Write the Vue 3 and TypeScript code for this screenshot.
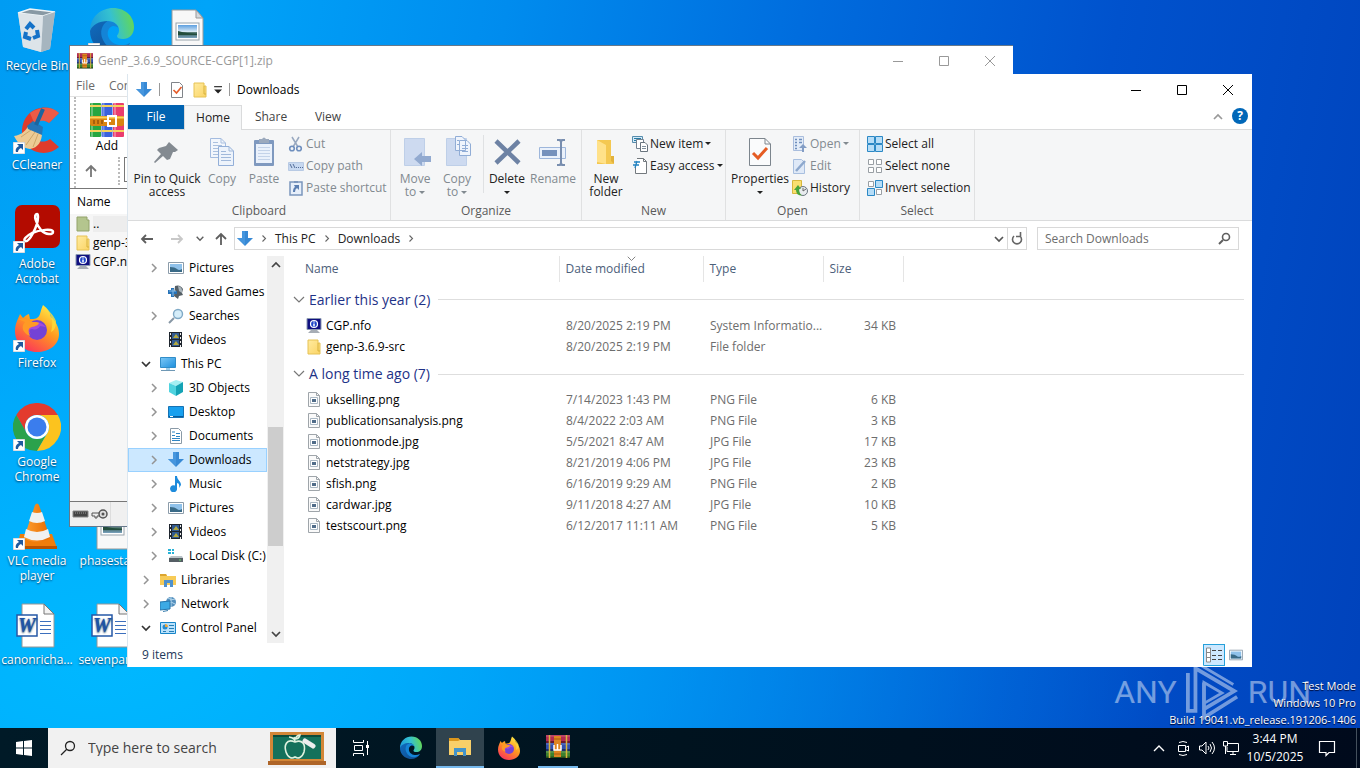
<script setup lang="ts">
import { ref } from 'vue'

interface Shortcut { label: string; icon: string; col: number; row: number; link?: boolean }
interface TreeNode { label: string; icon: string; child: boolean; arrow: '' | 'closed' | 'open'; active?: boolean }
interface FileRow { name: string; icon: string; date: string; type: string; size: string }
interface FileGroup { title: string; rows: FileRow[] }

const shortcuts: Shortcut[] = [
  { label: 'Recycle Bin', icon: 'bin', col: 1, row: 1 },
  { label: 'CCleaner', icon: 'ccleaner', col: 1, row: 2, link: true },
  { label: 'Adobe Acrobat', icon: 'acrobat', col: 1, row: 3, link: true },
  { label: 'Firefox', icon: 'firefox', col: 1, row: 4, link: true },
  { label: 'Google Chrome', icon: 'chrome', col: 1, row: 5, link: true },
  { label: 'VLC media player', icon: 'vlc', col: 1, row: 6, link: true },
  { label: 'canonricha...', icon: 'word', col: 1, row: 7 },
  { label: '', icon: 'edge', col: 2, row: 1, link: true },
  { label: 'phasestar...', icon: 'picfile', col: 2, row: 6 },
  { label: 'sevenpark...', icon: 'word', col: 2, row: 7 },
  { label: '', icon: 'picfile', col: 3, row: 1 },
]

const tree: TreeNode[] = [
  { label: 'Pictures', icon: 'pictures', child: true, arrow: 'closed' },
  { label: 'Saved Games', icon: 'games', child: true, arrow: '' },
  { label: 'Searches', icon: 'searches', child: true, arrow: 'closed' },
  { label: 'Videos', icon: 'videos', child: true, arrow: '' },
  { label: 'This PC', icon: 'pc', child: false, arrow: 'open' },
  { label: '3D Objects', icon: 'cube', child: true, arrow: 'closed' },
  { label: 'Desktop', icon: 'screen', child: true, arrow: 'closed' },
  { label: 'Documents', icon: 'document', child: true, arrow: 'closed' },
  { label: 'Downloads', icon: 'down', child: true, arrow: 'closed', active: true },
  { label: 'Music', icon: 'music', child: true, arrow: 'closed' },
  { label: 'Pictures', icon: 'pictures', child: true, arrow: 'closed' },
  { label: 'Videos', icon: 'videos', child: true, arrow: 'closed' },
  { label: 'Local Disk (C:)', icon: 'disk', child: true, arrow: 'closed' },
  { label: 'Libraries', icon: 'libraries', child: false, arrow: 'closed' },
  { label: 'Network', icon: 'network', child: false, arrow: 'closed' },
  { label: 'Control Panel', icon: 'cpanel', child: false, arrow: 'open' },
]

const groups: FileGroup[] = [
  {
    title: 'Earlier this year (2)',
    rows: [
      { name: 'CGP.nfo', icon: 'nfo', date: '8/20/2025 2:19 PM', type: 'System Informatio...', size: '34 KB' },
      { name: 'genp-3.6.9-src', icon: 'folder', date: '8/20/2025 2:19 PM', type: 'File folder', size: '' },
    ],
  },
  {
    title: 'A long time ago (7)',
    rows: [
      { name: 'ukselling.png', icon: 'image', date: '7/14/2023 1:43 PM', type: 'PNG File', size: '6 KB' },
      { name: 'publicationsanalysis.png', icon: 'image', date: '8/4/2022 2:03 AM', type: 'PNG File', size: '3 KB' },
      { name: 'motionmode.jpg', icon: 'image', date: '5/5/2021 8:47 AM', type: 'JPG File', size: '17 KB' },
      { name: 'netstrategy.jpg', icon: 'image', date: '8/21/2019 4:06 PM', type: 'JPG File', size: '23 KB' },
      { name: 'sfish.png', icon: 'image', date: '6/16/2019 9:29 AM', type: 'PNG File', size: '2 KB' },
      { name: 'cardwar.jpg', icon: 'image', date: '9/11/2018 4:27 AM', type: 'JPG File', size: '10 KB' },
      { name: 'testscourt.png', icon: 'image', date: '6/12/2017 11:11 AM', type: 'PNG File', size: '5 KB' },
    ],
  },
]

const selected = ref('Downloads')
const query = ref('')
const taskQuery = ref('')
</script>

<template>
  <svg class="sprite" aria-hidden="true">
    <defs>
      <linearGradient id="gEdge" x1="0" y1="0.5" x2="1" y2="0.3"><stop offset="0" stop-color="#1c9ddb" /><stop offset=".5" stop-color="#35c1d0" /><stop offset="1" stop-color="#66d94f" /></linearGradient>
      <linearGradient id="gEdge2" x1="0" y1="0" x2="1" y2="1"><stop offset="0" stop-color="#0f6cbf" /><stop offset="1" stop-color="#114a8b" /></linearGradient>
      <linearGradient id="gFox" x1="0.8" y1="0" x2="0.2" y2="1"><stop offset="0" stop-color="#fff04a" /><stop offset=".45" stop-color="#ff9a1f" /><stop offset="1" stop-color="#fb2d5f" /></linearGradient>
      <linearGradient id="gFolder" x1="0" y1="0" x2="1" y2="1"><stop offset="0" stop-color="#ffeba0" /><stop offset="1" stop-color="#fbd465" /></linearGradient>
      <linearGradient id="gScreen" x1="0" y1="0" x2="1" y2="1"><stop offset="0" stop-color="#7cc8f7" /><stop offset="1" stop-color="#1d8fdc" /></linearGradient>
      <linearGradient id="gPhoto" x1="0" y1="0" x2="0" y2="1"><stop offset="0" stop-color="#5c9fe0" /><stop offset=".5" stop-color="#d5e7f4" /><stop offset=".6" stop-color="#335c50" /><stop offset="1" stop-color="#7ba3c0" /></linearGradient>
      <linearGradient id="gCone" x1="0" y1="0" x2="1" y2="0"><stop offset="0" stop-color="#ffa033" /><stop offset="1" stop-color="#e66a00" /></linearGradient>
    </defs>

    <symbol id="bin" viewBox="0 0 48 48"><path d="M5 6 17 2 42 5 37 42 28 45 10 40Z" fill="#c9d3da" /><path d="M5 6 17 2 42 5 30 9Z" fill="#8899a4" stroke="#eef4f7" stroke-width="1.4" /><path d="M30 9 42 5 37 42 28 45Z" fill="#a6b5bf" /><path d="M5 6 30 9 28 45 10 40Z" fill="#dde4e9" /><g fill="none" stroke="#1572c8" stroke-width="4"><path d="m13 22 4-5 4 4M24 23l1 6-5 2M18 32l-6-2 1-5" /></g></symbol>
    <symbol id="edge" viewBox="0 0 48 48"><path d="M2 24C2 15 12 12 20 14 15 18 14 26 18 32c4 7 16 10 24 4-5 9-15 12-24 9C8 42 2 34 2 24Z" fill="url(#gEdge2)" /><path d="M20 14c-6 3-9 11-5 19 3 7 11 11 18 9 4-1 7-3 9-6-9 5-20 1-22-7-1-5 1-9 5-10 3 0 5 1 6 3-1-5-5-8-11-8Z" fill="#1484d6" /><path d="M2 24C2 10 13 1 25 1c13 0 21 9 21 19 0 8-5 12-11 12-4 0-6-1-6-3 0-1 2-2 2-6 0-5-5-9-11-9C11 14 4 18 2 24Z" fill="url(#gEdge)" /></symbol>
    <symbol id="picfile" viewBox="0 0 48 48"><path d="M9 3H33L40 11V47H9Z" fill="#f8f8f8" stroke="#999" /><path d="M33 3V11H40Z" fill="#d4d9de" stroke="#999" /><rect x="13" y="16" width="23" height="17" fill="#fff" stroke="#98a3ac" /><rect x="15" y="18" width="19" height="13" fill="url(#gPhoto)" /><path d="M15 24c7 2 12 2 19 3v1H15Z" fill="#234d3c" /></symbol>
    <symbol id="ccleaner" viewBox="0 0 48 48"><path d="M46 7 36 17C29 11 20 16 20 25c0 9 9 14 17 8l9 8C33 53 9 46 9 26 9 3 33-5 46 7Z" fill="#df3b2b" /><path d="M46 7 36 17c-5-4-11-2-14 2L17 7C26 1 38-1 46 7Z" fill="#f3715a" opacity=".6" /><path d="M1 30c8-1 12-6 15-11l13 8c0 8-4 15-12 16C10 42 5 38 1 30Z" fill="#eccb95" /><path d="m8 31 10-7M13 39l9-13M20 41l5-13" stroke="#cda769" /><path d="m14 20 6-5 10 6-1 8-14-6Z" fill="#2376b8" /><path d="m23 19 7-16" stroke="#1b659f" stroke-width="4" /></symbol>
    <symbol id="acrobat" viewBox="0 0 48 48"><rect x="2" y="0" width="45" height="43" rx="7" fill="#b30b00" /><path d="M24 9c-4 0-1 10 4 16 5 5 12 5 12 2 0-4-14-2-21 1-6 3-9 7-7 8 4 2 13-15 13-24 0-2 0-3-1-3Z" fill="none" stroke="#fff" stroke-width="2.500" /></symbol>
    <symbol id="firefox" viewBox="0 0 48 48"><path d="M30 1c5 4 7 7 8 12 4 4 8 9 8 17 0 11-10 18-22 18C11 48 2 39 2 27 2 20 5 15 7 10l3 4c2-2 3-3 6-4l1 5c5 0 8 0 10-5 1-4 2-7 3-9Z" fill="url(#gFox)" /><circle cx="24" cy="26" r="10" fill="#7442d6" /><path d="M14 24c2-6 13-9 19-1l-6-1c-1 3-5 4-8 3-3 0-3 3-1 5-3-1-4-3-4-6Z" fill="#a44bdd" /><path d="M5 15c5-1 9-1 12 2 3 2 7 0 9 2-1 4-8 3-10 6-1 2 0 4 1 7-8-3-9-10-5-14Z" fill="#ff9a25" /><path d="M31 2c8 8 10 16 7 26 4-2 5-6 5-11-3-7-8-11-12-15Z" fill="#ffdc3b" opacity=".8" /></symbol>
    <symbol id="chrome" viewBox="0 0 48 48"><path d="M24 12h20.800A24 24 0 0 0 3.200 12l10.400 18A12 12 0 0 1 24 12Z" fill="#e33b2e" /><path d="M13.600 30 3.200 12A24 24 0 0 0 24 48l10.400-18a12 12 0 0 1-20.800 0Z" fill="#2ba24c" /><path d="M34.400 30 24 48a24 24 0 0 0 20.800-36H24a12 12 0 0 1 10.400 18Z" fill="#fcc31e" /><circle cx="24" cy="24" r="12" fill="#fff" /><circle cx="24" cy="24" r="9.500" fill="#3b7ded" /></symbol>
    <symbol id="vlc" viewBox="0 0 48 48"><path d="M7 32H39L44 46H4Z" fill="#ef7d0b" /><path d="M4 44H44V47H4Z" fill="#b95300" /><path d="M22 3Q24 0 26 3L37 36Q24 44 11 36Z" fill="url(#gCone)" /><path d="m19 10-3 9q8 4 16 0l-3-9q-5 2-10 0ZM13 27l-2 8q13 7 26 0l-2-8q-11 6-22 0Z" fill="#f1f1f1" /></symbol>
    <symbol id="word" viewBox="0 0 48 48"><path d="M9 3H31L41 13V46H9Z" fill="#fff" stroke="#969696" /><path d="M31 3V13H41Z" fill="#f3f3f3" stroke="#777" /><path d="M27 20.500H38M27 24.500H38M27 28.500H38M27 32.500H38" stroke="#3b6fbd" /><rect x="4" y="14" width="20" height="21" fill="#fff" stroke="#2658a6" stroke-width="1.500" /><text x="14" y="31" text-anchor="middle" font-family="Liberation Serif, serif" font-size="20" font-weight="700" font-style="italic" fill="#1f53a6">W</text></symbol>
    <symbol id="link" viewBox="0 0 12 12"><path d="M0 0H12V12H0Z" fill="#fff" stroke="#b7bec6" /><path d="M4 2H10V8L8 6C6 7 5 8 5 10H3C2 7 4 5 6 4Z" fill="#205a9e" /></symbol>

    <symbol id="rar" viewBox="0 0 34 34"><rect x="0" y="0" width="11" height="34" rx="1" fill="#27a640" /><rect x="11.500" y="0" width="11" height="34" rx="1" fill="#3a62dd" /><rect x="23" y="0" width="11" height="34" rx="1" fill="#ea3c6e" /><path d="M2 0V34M13.500 0V34M25 0V34" stroke="#fff" stroke-opacity=".3" stroke-width="2" /><path d="M0 3H11M11.500 3H22.500M23 3H34M0 28H11M11.500 28H22.500M23 28H34" stroke="#f5d25d" stroke-width="2" /><rect x="0" y="13" width="34" height="10" rx="2" fill="#d98412" /><path d="M0 14.500H34" stroke="#ffd45a" stroke-width="2" /><path d="M4 17v4m4-4v4m4-4v4" stroke="#773b07" /><rect x="18" y="13" width="8" height="10" fill="none" stroke="#fff" stroke-width="2" /><path d="M14 18H21" stroke="#fff" stroke-width="2" /></symbol>
    <symbol id="rarsmall" viewBox="0 0 24 24"><path d="M0 0H24V8H0Z" fill="#b12a52" /><path d="M0 8H24V16H0Z" fill="#304fae" /><path d="M0 16H24V23H0Z" fill="#3c812e" /><path d="M0 1H24M0 9H24M0 17H24" stroke="#fff" stroke-opacity=".25" /><path d="M0 7H24M0 15H24M0 22.500H24" stroke="#000" stroke-opacity=".4" stroke-width="2" /><path d="M3.500 0V23M20.500 0V23" stroke="#d8b43c" stroke-width="1.500" /><rect x="8" y="1" width="7" height="21" fill="#df8520" /><path d="M8 4H15M8 19H15" stroke="#a45a0e" /><path d="M8 10V15H15V10M11.500 9V15" fill="none" stroke="#fff" stroke-width="1.500" /></symbol>
    <symbol id="folder" viewBox="0 0 16 16"><path d="M2 1H12V4H14V15H2Z" fill="url(#gFolder)" stroke="#e6c255" /><path d="M12 4V12H14" stroke="#d7b23d" fill="none" /></symbol>
    <symbol id="upfolder" viewBox="0 0 16 16"><path d="M2 1H12V4H14V15H2Z" fill="#b4c58e" stroke="#93a36b" /></symbol>
    <symbol id="nfo" viewBox="0 0 16 16"><path d="M1 .5H15V11.500H1Z" fill="#101080" stroke="#8b99b1" /><circle cx="8" cy="6" r="3.500" fill="#1f46c8" stroke="#fff" stroke-width="1.200" /><path d="M8 3.500V4.500M8 5.500V8.500" stroke="#fff" stroke-width="1.500" /><path d="M5 12H11L14 15H2Z" fill="#a7adb5" /></symbol>
    <symbol id="image" viewBox="0 0 16 16"><path d="M2.500.5H10.500L13.500 3.500V14.500H2.500Z" fill="#fafafa" stroke="#9fa5aa" /><path d="M10.500.5V3.500H13.500" fill="none" stroke="#9fa5aa" /><path d="M4.500 5.500H11.500V11.500H4.500Z" fill="#fff" stroke="#aab8c4" /><path d="M6 7H10V10H6Z" fill="#506c89" /></symbol>
    <symbol id="down" viewBox="0 0 16 16"><path d="M5 0H11V7H16L8 15 0 7H5Z" fill="#3789d5" /><path d="M5 0H8V14L0 7H5Z" fill="#4d9be1" opacity=".7" /></symbol>
    <symbol id="pictures" viewBox="0 0 16 16"><path d="M.5 2.500H15.500V13.500H.5Z" fill="#fff" stroke="#8c9caa" /><path d="M2 4H14V12H2Z" fill="#8fc1ea" /><path d="M2 7Q7 7 9 9T14 9V12H2Z" fill="#396a87" /></symbol>
    <symbol id="games" viewBox="0 0 16 16"><path d="M7 2Q12 0 15 5L14 9 15 11 11 12 10 15 6 12Z" fill="#555f66" /><path d="M10 2Q15 3 14 9L11 7Z" fill="#a9b4bb" /><path d="M0 6H3V4H6V7H9V10H6V13H3V10H0Z" fill="#2773b8" /><path d="M1 7H8M5 5V12" stroke="#87bbe5" /></symbol>
    <symbol id="searches" viewBox="0 0 16 16"><path d="m6 10-5 5" stroke="#8797a5" stroke-width="2" /><circle cx="10" cy="6" r="4.500" fill="#d5edf9" stroke="#7fa9c6" stroke-width="1.400" /></symbol>
    <symbol id="videos" viewBox="0 0 16 16"><path d="M1 0H14V15H1Z" fill="#1e252e" /><path d="M4 1H11V7H4ZM4 8H11V14H4Z" fill="#315a91" /><path d="m5 6 3-4 3 4ZM5 13l3-4 3 4Z" fill="#b3a93f" /><path d="M2.500 1V15M12.500 1V15" stroke="#eee" stroke-dasharray="2 2" /></symbol>
    <symbol id="pc" viewBox="0 0 16 16"><path d="M.5 1.500H15.500V11.500H.5Z" fill="url(#gScreen)" stroke="#318dc8" /><path d="M1 14.500H15" stroke="#6f98b5" /><path d="M6 12H10V14H6Z" fill="#9ccdea" /></symbol>
    <symbol id="cube" viewBox="0 0 16 16"><path d="m1 3 7-3 7 2-7 4Z" fill="#a5f0f3" /><path d="M1 3 8 6V16L1 12Z" fill="#4fd3df" /><path d="m8 6 7-4V12L8 16Z" fill="#14a3b5" /></symbol>
    <symbol id="screen" viewBox="0 0 16 16"><path d="M.5 2.500H15.500V13.500H.5Z" fill="#18a0ef" stroke="#1672b3" /><path d="M1 12.500H15" stroke="#075c9d" /><path d="M2 12.500H5" stroke="#fff" /></symbol>
    <symbol id="document" viewBox="0 0 16 16"><path d="M2.500.5H10.500L13.500 3.500V15.500H2.500Z" fill="#fff" stroke="#8a9aa7" /><path d="M4 4H7M8 5.500H12M4 7.500H7M8 8.500H12M4 10.500H12M4 12.500H12" stroke="#2f86c4" stroke-width="1.200" /></symbol>
    <symbol id="music" viewBox="0 0 16 16"><path d="M7 0H9C9 4 13 5 13 9L11 12C12 8 10 7 9 7V12A3.500 3.500 0 1 1 7 9.500Z" fill="#1d8bdc" /></symbol>
    <symbol id="disk" viewBox="0 0 16 16"><path d="M0 1H3V3H0ZM4 1H6V3H4ZM0 4H3V6H0ZM4 4H6V6H4Z" fill="#26b2d7" /><path d="M3 8H14L15 10H1Z" fill="#bac3c8" /><path d="M1 10H15V14H1Z" fill="#555e65" /><path d="M11 12H13" stroke="#64dc6c" /></symbol>
    <symbol id="libraries" viewBox="0 0 16 16"><path d="M0 2H6L7 4H16V13H0Z" fill="#f7cb57" /><path d="M0 2H6L7 4H0Z" fill="#dca52f" /><path d="M4 8H13V15H10V11H7V15H4Z" fill="#4e91ce" /></symbol>
    <symbol id="network" viewBox="0 0 16 16"><circle cx="11" cy="6" r="5" fill="#5590be" /><path d="M8 2Q12 5 15 3M7 7Q12 5 15 8M11 1V11" stroke="#b6d8ed" fill="none" /><path d="m0 6 10-1v8l-10 1Z" fill="#3caae5" stroke="#2475ac" /><path d="M3 15.500 8 14.500" stroke="#387eae" /></symbol>
    <symbol id="cpanel" viewBox="0 0 16 16"><path d="M.5 2.500H15.500V13.500H.5Z" fill="#b9e1fb" stroke="#1685c9" /><circle cx="5" cy="7" r="2.500" fill="#268bce" /><path d="M5 7V4A3 3 0 0 1 8 7Z" fill="#eba73c" /><path d="M9 5.500H14M9 8.500H14M3 11.500H6M9 11.500H14" stroke="#257fb9" /></symbol>

    <symbol id="pin" viewBox="0 0 32 32"><path d="m18 6 9 8-3 2-2 0-3 7-3 1-4-4-8 7-1-1 7-8-4-4 2-2 7-2Z" fill="#838a91" /></symbol>
    <symbol id="copy" viewBox="0 0 32 32"><path d="M4.500 2.500H15L19.500 7V21.500H4.500Z" fill="#f2f6fc" stroke="#a4bce0" /><path d="M15 2.500V7H19.500M7 6.500H12M7 9.500H16M7 12.500H16M7 15.500H16M7 18.500H12" fill="none" stroke="#aac0df" /><path d="M12.500 10.500H23L27.500 15V29.500H12.500Z" fill="#edf3fb" stroke="#93afd8" /><path d="M23 10.500V15H27.500M15 15.500H20M15 18.500H25M15 21.500H25M15 24.500H25" fill="none" stroke="#a0b8da" /></symbol>
    <symbol id="paste" viewBox="0 0 32 32"><rect x="6" y="4" width="20" height="26" rx="1" fill="#7f99bf" /><path d="M8 8H24V27H8Z" fill="#eaf1fb" /><path d="M10 11.500H22M10 14.500H22M10 17.500H22M10 20.500H22M10 23.500H22" stroke="#c4d3e9" /><path d="M11 3H14Q16 0 18 3H21V7H11Z" fill="#9ba9bd" /></symbol>
    <symbol id="cut" viewBox="0 0 16 16"><path d="m4 1 6 10M11 1 5 11" stroke="#99a9c0" stroke-width="1.500" /><circle cx="4" cy="12.500" r="2.300" fill="none" stroke="#6f8fbe" stroke-width="1.600" /><circle cx="11" cy="12.500" r="2.300" fill="none" stroke="#6f8fbe" stroke-width="1.600" /></symbol>
    <symbol id="copypath" viewBox="0 0 16 16"><path d="M.5 4.500H15.500V12.500H.5Z" fill="#c7d8f0" stroke="#b8cae4" /><path d="m2 6 2 4m1-4 2 4" stroke="#536d99" /><path d="M8 9.500H15" stroke="#536d99" stroke-dasharray="1 1" /></symbol>
    <symbol id="pasteshort" viewBox="0 0 16 16"><path d="M2 2H14V15H2Z" fill="#e7effa" stroke="#7b96bd" stroke-width="1.500" /><path d="M6 1H10V3H6Z" fill="#7b96bd" /><path d="M6 5H11V10L9 8Q7 9 7 12H5Q5 8 7 7Z" fill="#5a7eb2" /></symbol>
    <symbol id="moveto" viewBox="0 0 32 32"><path d="M5.500 2.500H25.500V29.500H5.500Z" fill="#cddaf0" stroke="#becfe8" /><path d="m15 23 8-7V20H32V26H23V30Z" fill="#92aad0" /></symbol>
    <symbol id="copyto" viewBox="0 0 32 32"><path d="M5.500 2.500H25.500V29.500H5.500Z" fill="#cddaf0" stroke="#becfe8" /><path d="M14.500.5H21L24.500 4V14.500H14.500ZM18.500 4.500H26L29.500 8V19.500H18.500Z" fill="#eff4fc" stroke="#91add6" /><path d="M21 9.500H27M21 12.500H27M21 15.500H27M16 4.500H18M16 8.500H18" stroke="#91add6" /></symbol>
    <symbol id="delete" viewBox="0 0 32 32"><path d="M5 5 28 27M28 5 5 27" stroke="#6d82a4" stroke-width="4.500" /></symbol>
    <symbol id="rename" viewBox="0 0 32 32"><path d="M2.500 11.500H28.500V22.500H2.500Z" fill="#eaf1fb" stroke="#9db6db" /><path d="M5 14H20V20H5Z" fill="#7591bc" /><path d="M20 4H23L24 6 25 4H28M24 5V28M20 29H23L24 27 25 29H28" fill="none" stroke="#788eaf" stroke-width="2" /></symbol>
    <symbol id="newfolder" viewBox="0 0 32 32"><path d="M7 4H21V22L24 28H7Z" fill="#f4c851" /><path d="M21 20H24V28L21 25Z" fill="#e2b23c" /><path d="m7 4 9 5V28L7 26Z" fill="#ffe189" /></symbol>
    <symbol id="newitem" viewBox="0 0 16 16"><path d="M.5.5H10.500V6.500H.5Z" fill="#d4eaf8" stroke="#568cac" /><path d="M2 2.500H9M2 4.500H9" stroke="#277ca6" /><path d="M4.500 3.500H11.500V12.500H4.500Z" fill="#fff" stroke="#748290" /><path d="M8.500 6.500H13L15.500 9V15.500H8.500Z" fill="#fff" stroke="#69747e" /><path d="M10 10.500H14M10 12.500H14" stroke="#80909d" /></symbol>
    <symbol id="easy" viewBox="0 0 16 16"><path d="M5 .5H11.500L14.500 3.500V15.500H3.500V8" fill="#fff" stroke="#73797e" /><path d="M11.500.5V3.500H14.500" fill="none" stroke="#73797e" /><path d="M2 4H8M1 7H7M5 3 3 10" stroke="#2383c1" stroke-width="1.300" /></symbol>
    <symbol id="props" viewBox="0 0 32 32"><path d="M5.500 2.500H21L26.500 8V29.500H5.500Z" fill="#fafbfc" stroke="#7c858d" /><path d="M21 2.500V8H26.500" fill="none" stroke="#7c858d" /><path d="m9 17 5 5 9-10" fill="none" stroke="#e55c24" stroke-width="3" /></symbol>
    <symbol id="check" viewBox="0 0 16 16"><path d="M2.500.5H10.500L13.500 3.500V15.500H2.500Z" fill="#fff" stroke="#808489" /><path d="m4.500 8 3 3 5-6" fill="none" stroke="#e55d2b" stroke-width="1.700" /></symbol>
    <symbol id="open" viewBox="0 0 16 16"><path d="M1.500.5H11.500V14.500H1.500Z" fill="#e3ecf8" stroke="#a9bddd" /><path d="M3 3.500H5M3 6.500H5M3 9.500H5M3 12.500H5M7 3.500H10M7 6.500H10" stroke="#6f8ebc" stroke-width="1.500" /><path d="m7 12 4-4 4 4H12V16H10V12Z" fill="#839dc5" /></symbol>
    <symbol id="edit" viewBox="0 0 16 16"><path d="M1.500 1.500H9.500L12.500 4.500V15.500H1.500Z" fill="#dfe9f7" stroke="#a8bfdf" /><path d="M4 13 13 3" stroke="#8da8cd" stroke-width="2.500" /></symbol>
    <symbol id="history" viewBox="0 0 16 16"><path d="M.5.5H9.500V13.500H.5Z" fill="#f9df70" stroke="#d7b83d" /><circle cx="11" cy="11" r="4.500" fill="#e8ecef" stroke="#6a7680" /><path d="M11 8V11L14 9" stroke="#666" fill="none" /><path d="M2 10 6 5 9 9H7Q7 13 10 15.500 4 15.500 4 10Z" fill="#49a43a" /></symbol>
    <symbol id="selall" viewBox="0 0 16 16"><path d="M.5.5H7.500V7.500H.5ZM8.500.5H15.500V7.500H8.500ZM.5 8.500H7.500V15.500H.5ZM8.500 8.500H15.500V15.500H8.500Z" fill="#b6ddf7" stroke="#2b88c5" /></symbol>
    <symbol id="selnone" viewBox="0 0 16 16"><path d="M1.500 1.500H6.500V6.500H1.500ZM9.500 1.500H14.500V6.500H9.500ZM1.500 9.500H6.500V14.500H1.500ZM9.500 9.500H14.500V14.500H9.500Z" fill="#fff" stroke="#999fa4" /></symbol>
    <symbol id="invert" viewBox="0 0 16 16"><path d="M1.500 1.500H6.500V6.500H1.500ZM9.500 9.500H14.500V14.500H9.500Z" fill="#fff" stroke="#999fa4" /><path d="M8.500.5H15.500V7.500H8.500ZM.5 8.500H7.500V15.500H.5Z" fill="#b6ddf7" stroke="#2b88c5" /></symbol>
    <symbol id="caret" viewBox="0 0 6 4"><path d="M0 0H6L3 3Z" fill="currentColor" /></symbol>
    <symbol id="chevR" viewBox="0 0 8 12"><path d="M2 2 6 6 2 10" fill="none" stroke="currentColor" stroke-width="1.500" /></symbol>
    <symbol id="chevD" viewBox="0 0 12 8"><path d="M2 2 6 6 10 2" fill="none" stroke="currentColor" stroke-width="1.700" /></symbol>
    <symbol id="chevThin" viewBox="0 0 12 8"><path d="M1 1 6 6 11 1" fill="none" stroke="currentColor" stroke-width="1.200" /></symbol>
    <symbol id="chevU" viewBox="0 0 12 8"><path d="M2 6 6 2 10 6" fill="none" stroke="currentColor" stroke-width="1.700" /></symbol>
    <symbol id="min" viewBox="0 0 12 12"><path d="M1 6.500H11" stroke="currentColor" /></symbol>
    <symbol id="max" viewBox="0 0 12 12"><path d="M1.500 1.500H10.500V10.500H1.500Z" fill="none" stroke="currentColor" /></symbol>
    <symbol id="close" viewBox="0 0 12 12"><path d="m1 1 10 10M11 1 1 11" stroke="currentColor" /></symbol>
    <symbol id="left" viewBox="0 0 14 14"><path d="M13 7H2M6 3 2 7 6 11" fill="none" stroke="currentColor" stroke-width="1.800" /></symbol>
    <symbol id="right" viewBox="0 0 14 14"><path d="M1 7H12M8 3 12 7 8 11" fill="none" stroke="currentColor" stroke-width="1.800" /></symbol>
    <symbol id="up" viewBox="0 0 14 14"><path d="M7 13V2M2 7 7 2 12 7" fill="none" stroke="currentColor" stroke-width="1.800" /></symbol>
    <symbol id="glass" viewBox="0 0 16 16"><circle cx="10" cy="6" r="4.500" fill="none" stroke="currentColor" stroke-width="1.300" /><path d="M7 9 1 15" stroke="currentColor" stroke-width="1.300" /></symbol>
    <symbol id="glassBold" viewBox="0 0 14 14"><circle cx="9" cy="5" r="3.500" fill="none" stroke="currentColor" stroke-width="1.600" /><path d="M6 8 2 12" stroke="currentColor" stroke-width="2" /></symbol>
  </svg>

  <div class="screen">
    <main class="desktop">
      <div class="shortcuts">
        <a v-for="(s, i) in shortcuts" :key="i" href="#" class="shortcut" :class="['col' + s.col, 'row' + s.row]" :aria-label="s.label || s.icon">
          <span class="pic">
            <svg class="i48"><use :href="'#' + s.icon" /></svg>
            <svg v-if="s.link" class="overlay"><use href="#link" /></svg>
          </span>
          <span class="caption">{{ s.label }}</span>
        </a>
      </div>

      <section class="archive">
        <header class="atitle">
          <svg class="i16"><use href="#rarsmall" /></svg>
          <span class="grow">GenP_3.6.9_SOURCE-CGP[1].zip</span>
          <button aria-label="Minimize"><svg class="i12"><use href="#min" /></svg></button>
          <button aria-label="Maximize"><svg class="i12"><use href="#max" /></svg></button>
          <button aria-label="Close"><svg class="i12"><use href="#close" /></svg></button>
        </header>
        <nav class="amenu"><button>File</button><button>Commands</button></nav>
        <div class="atools"><button><svg class="i34"><use href="#rar" /></svg>Add</button></div>
        <div class="apath"><button aria-label="Up"><svg class="i14"><use href="#up" /></svg></button><input aria-label="Path" type="text" /></div>
        <div class="alist">
          <div class="ahead">Name</div>
          <div class="arow parent"><svg class="i16"><use href="#upfolder" /></svg><span>..</span></div>
          <div class="arow"><svg class="i16"><use href="#folder" /></svg><span>genp-3.6.9-src</span></div>
          <div class="arow"><svg class="i16"><use href="#nfo" /></svg><span>CGP.nfo</span></div>
        </div>
        <footer class="astatus">
          <svg viewBox="0 0 38 14" class="drive"><path d="M1 4H16V10H1Z" fill="#444" stroke="#888" /><path d="M3 6H14" stroke="#999" stroke-dasharray="1 1" /><path d="M20 6H29V9H25V11H23V9H20Z" fill="#eee" stroke="#555" /><circle cx="31" cy="7" r="4" fill="#ddd" stroke="#555" stroke-width="1.500" /><circle cx="31" cy="7" r="1.500" fill="#555" /></svg>
        </footer>
      </section>

      <section class="explorer">
        <header class="title">
          <svg class="i16"><use href="#down" /></svg><i class="bar"></i>
          <button class="quick" aria-label="Properties"><svg class="i16"><use href="#check" /></svg></button>
          <button class="quick" aria-label="New folder"><svg class="i16"><use href="#folder" /></svg></button>
          <button class="custom" aria-label="Customize"><svg viewBox="0 0 8 8"><path d="M1 1.500H8" stroke="#222" /><path d="M1 4H8L4.500 7.500Z" fill="#222" /></svg></button>
          <i class="bar"></i><span class="name grow">Downloads</span>
          <button class="wbtn" aria-label="Minimize"><svg class="i12"><use href="#min" /></svg></button>
          <button class="wbtn" aria-label="Maximize"><svg class="i12"><use href="#max" /></svg></button>
          <button class="wbtn" aria-label="Close"><svg class="i12"><use href="#close" /></svg></button>
        </header>

        <nav class="tabs">
          <button class="file">File</button><button class="on">Home</button><button>Share</button><button>View</button>
          <span class="grow"></span>
          <button class="fold" aria-label="Collapse ribbon"><svg class="c12"><use href="#chevU" /></svg></button>
          <button class="help">?</button>
        </nav>

        <div class="ribbon">
          <div class="group clip">
            <div class="tools">
              <button class="big wide"><svg class="i32"><use href="#pin" /></svg><span>Pin to Quick<br />access</span></button>
              <button class="big off"><svg class="i32"><use href="#copy" /></svg>Copy</button>
              <button class="big off"><svg class="i32"><use href="#paste" /></svg>Paste</button>
              <div class="smalls">
                <button class="off"><svg class="i16"><use href="#cut" /></svg>Cut</button>
                <button class="off"><svg class="i16"><use href="#copypath" /></svg>Copy path</button>
                <button class="off"><svg class="i16"><use href="#pasteshort" /></svg>Paste shortcut</button>
              </div>
            </div>
            <div class="legend">Clipboard</div>
          </div>
          <div class="group organize">
            <div class="tools">
              <button class="big off"><svg class="i32"><use href="#moveto" /></svg><span>Move<br />to <svg class="caret"><use href="#caret" /></svg></span></button>
              <button class="big off"><svg class="i32"><use href="#copyto" /></svg><span>Copy<br />to <svg class="caret"><use href="#caret" /></svg></span></button>
              <i class="split"></i>
              <button class="big mid"><svg class="i32"><use href="#delete" /></svg><span>Delete<br /><svg class="caret"><use href="#caret" /></svg></span></button>
              <button class="big mid off"><svg class="i32"><use href="#rename" /></svg>Rename</button>
            </div>
            <div class="legend">Organize</div>
          </div>
          <div class="group new">
            <div class="tools">
              <button class="big mid"><svg class="i32"><use href="#newfolder" /></svg><span>New<br />folder</span></button>
              <div class="smalls">
                <button><svg class="i16"><use href="#newitem" /></svg>New item<svg class="caret"><use href="#caret" /></svg></button>
                <button><svg class="i16"><use href="#easy" /></svg>Easy access<svg class="caret"><use href="#caret" /></svg></button>
              </div>
            </div>
            <div class="legend">New</div>
          </div>
          <div class="group opens">
            <div class="tools">
              <button class="big wide"><svg class="i32"><use href="#props" /></svg><span>Properties<br /><svg class="caret"><use href="#caret" /></svg></span></button>
              <div class="smalls">
                <button class="off"><svg class="i16"><use href="#open" /></svg>Open<svg class="caret"><use href="#caret" /></svg></button>
                <button class="off"><svg class="i16"><use href="#edit" /></svg>Edit</button>
                <button><svg class="i16"><use href="#history" /></svg>History</button>
              </div>
            </div>
            <div class="legend">Open</div>
          </div>
          <div class="group select">
            <div class="tools">
              <div class="smalls">
                <button><svg class="i16"><use href="#selall" /></svg>Select all</button>
                <button><svg class="i16"><use href="#selnone" /></svg>Select none</button>
                <button><svg class="i16"><use href="#invert" /></svg>Invert selection</button>
              </div>
            </div>
            <div class="legend">Select</div>
          </div>
        </div>

        <div class="address">
          <button aria-label="Back"><svg class="i14"><use href="#left" /></svg></button>
          <button aria-label="Forward" class="dim"><svg class="i14"><use href="#right" /></svg></button>
          <button aria-label="Recent" class="narrow"><svg class="c10"><use href="#chevD" /></svg></button>
          <button aria-label="Up" class="upper"><svg class="i14"><use href="#up" /></svg></button>
          <div class="crumbs">
            <svg class="i16"><use href="#down" /></svg>
            <svg class="csep"><use href="#chevR" /></svg><a href="#">This PC</a>
            <svg class="csep"><use href="#chevR" /></svg><a href="#">Downloads</a>
            <svg class="csep"><use href="#chevR" /></svg>
            <span class="grow"></span>
            <button aria-label="History" class="drop"><svg class="c12"><use href="#chevD" /></svg></button>
            <button aria-label="Refresh" class="refresh"><svg viewBox="0 0 14 14" class="i14"><path d="M4 4A4.500 4.500 0 1 0 10 4M6 4.500H10.500V0" fill="none" stroke="#666" stroke-width="1.600" /></svg></button>
          </div>
          <label class="find"><input v-model="query" type="text" placeholder="Search Downloads" aria-label="Search Downloads" /><svg class="i14"><use href="#glassBold" /></svg></label>
        </div>

        <div class="body">
          <ul class="tree">
            <li v-for="(n, i) in tree" :key="i">
              <button :class="{ child: n.child, active: n.active }" @click="selected = n.label">
                <span class="twist" :class="n.arrow">
                  <svg v-if="n.arrow === 'closed'" class="sep"><use href="#chevR" /></svg>
                  <svg v-if="n.arrow === 'open'" class="c12"><use href="#chevD" /></svg>
                </span>
                <svg class="i16"><use :href="'#' + n.icon" /></svg><span>{{ n.label }}</span>
              </button>
            </li>
          </ul>
          <div class="scroll">
            <svg class="c12"><use href="#chevU" /></svg><i class="before"></i><i class="thumb"></i><i class="after"></i><svg class="c12"><use href="#chevD" /></svg>
          </div>
          <div class="files">
            <table>
              <colgroup><col class="w-name" /><col class="w-date" /><col class="w-type" /><col class="w-size" /><col /></colgroup>
              <thead>
                <tr><th class="first">Name</th><th><svg class="sorted"><use href="#chevThin" /></svg>Date modified</th><th>Type</th><th>Size</th><th class="last"></th></tr>
              </thead>
              <tbody v-for="g in groups" :key="g.title">
                <tr class="ghead"><th colspan="5"><div><svg class="c12"><use href="#chevThin" /></svg><span>{{ g.title }}</span><i></i></div></th></tr>
                <tr v-for="f in g.rows" :key="f.name">
                  <td class="fname"><div><svg class="i16"><use :href="'#' + f.icon" /></svg><span>{{ f.name }}</span></div></td>
                  <td>{{ f.date }}</td><td>{{ f.type }}</td><td class="num">{{ f.size }}</td><td></td>
                </tr>
              </tbody>
            </table>
          </div>
        </div>

        <footer class="status">
          <span class="grow">9 items</span>
          <button class="view on" aria-label="Details"><svg viewBox="0 0 16 16" class="i16"><path d="M.5 1H4.500V15H.5ZM.5 5.500H4.500M.5 10.500H4.500" fill="#fff" stroke="#888" /><path d="M6 3.500H10M12 3.500H16M6 8.500H10M12 8.500H16M6 12.500H10M12 12.500H16" stroke="#444" /></svg></button>
          <button class="view" aria-label="Thumbnails"><svg class="i14"><use href="#pictures" /></svg></button>
        </footer>
      </section>

      <div class="mark" aria-hidden="true">
        <span>ANY</span>
        <svg viewBox="0 0 56 64"><path d="M2 12V52H10V7L51 31 19 50M19 22V59L54 37" fill="none" stroke="#fff" stroke-width="4" /><path d="m16 4 34 20M19 22 38 33 19 44Z" fill="none" stroke="#fff" stroke-width="3" /></svg>
        <span>RUN</span>
      </div>
      <div class="build">Test Mode<br />Windows 10 Pro<br />Build 19041.vb_release.191206-1406</div>
    </main>

    <footer class="taskbar">
      <button class="start" aria-label="Start"><svg viewBox="0 0 16 16" class="i16"><path d="M0 2 7 1V7.500H0ZM8 1 16 0V7.500H8ZM0 8.500H7V15L0 14ZM8 8.500H16V16L8 15Z" fill="#fff" /></svg></button>
      <label class="tsearch">
        <svg class="i16"><use href="#glass" /></svg>
        <input v-model="taskQuery" type="text" placeholder="Type here to search" aria-label="Type here to search" />
        <svg viewBox="0 0 58 36" class="board"><path d="M2 2H56V31H2Z" fill="#d28637" /><path d="M5 5H53V29H5Z" fill="#14715b" /><path d="M5 5H53V7H5Z" fill="#0b4c3c" /><path d="M0 31H58V35H0Z" fill="#ae6528" /><path d="M27 12C18 8 16 16 18 22 20 28 24 29 27 27 30 29 34 28 36 22 38 14 34 9 27 12ZM27 12Q27 9 26 7M27 9Q29 5 32 5 31 9 27 9M21 7Q24 7 27 10" fill="none" stroke="#dff2df" stroke-width="1.600" /><path d="m37 11 8 5" stroke="#eee" stroke-width="5" stroke-linecap="round" /></svg>
      </label>
      <button class="app" aria-label="Task view"><svg viewBox="0 0 18 16" class="tv"><path d="M1.500 0V2.500H11.500V0M1.500 16V13.500H11.500V16M2.500 5.500H10.500V10.500H2.500ZM15.500 1V15" fill="none" stroke="#fff" /><path d="M14 5H17V8H14Z" fill="#fff" /></svg></button>
      <button class="app edge" aria-label="Microsoft Edge"><svg class="i24"><use href="#edge" /></svg></button>
      <button class="app current" aria-label="File Explorer"><svg viewBox="0 0 24 24" class="i24"><path d="M1 3H10L12 5H23V20H1Z" fill="#f8cf69" /><path d="M1 3H10L12 5 10 6H1Z" fill="#dc971c" /><path d="M6 13H18V21H15V17H9V21H6Z" fill="#4393c9" /></svg></button>
      <button class="app" aria-label="Firefox"><svg class="i24"><use href="#firefox" /></svg></button>
      <button class="app running" aria-label="WinRAR"><svg class="i24"><use href="#rarsmall" /></svg></button>
      <span class="grow"></span>
      <button class="tray" aria-label="Hidden icons"><svg class="i14" viewBox="0 0 14 14"><path d="m2 10 5-5 5 5" fill="none" stroke="#fff" stroke-width="1.400" /></svg></button>
      <button class="tray" aria-label="Camera"><svg class="i16" viewBox="0 0 16 16"><path d="M3.500 5.500H10.500V11.500H3.500ZM10.500 7.500 13.500 6V11L10.500 9.500M4 2.500Q8 .5 12 2.500M4 14.500Q8 16.500 12 14.500" fill="none" stroke="#fff" /></svg></button>
      <button class="tray" aria-label="Volume"><svg class="i16" viewBox="0 0 16 16"><path d="M.5 6H3L7 2V14L3 10H.5ZM9 6Q11 8 9 10M11 4Q14 8 11 12M13 2Q18 8 13 14" fill="none" stroke="#fff" /></svg></button>
      <button class="tray" aria-label="Network"><svg class="i16" viewBox="0 0 16 16"><path d="M5 3.500H15.500V11.500H4V7M.5 1.500H4.500V6H.5ZM2.500 6V14M7 14.500H13M10 12V14" fill="none" stroke="#fff" /></svg></button>
      <button class="clock">3:44 PM<br />10/5/2025</button>
      <button class="note" aria-label="Notifications"><svg viewBox="0 0 18 18"><path d="M1.500 2.500H16.500V13.500H11L8 16.500V13.500H1.500Z" fill="none" stroke="#fff" stroke-width="1.200" /></svg></button>
      <i class="peek"></i>
    </footer>
  </div>
</template>

<style>
body { margin: 0; }
</style>

<style scoped>
* { box-sizing: border-box; }
.sprite { position: absolute; width: 0; height: 0; }
.screen { position: relative; min-height: 100vh; display: flex; flex-direction: column; overflow: hidden; font: 12px/16px "Segoe UI", "Open Sans", "Noto Sans", sans-serif; color: #000; background: linear-gradient(100deg, #009cf3 0%, #00a4f9 14%, #008cee 34%, #006bdd 55%, #0052cd 75%, #0042bb 100%); }
.screen::before { content: ""; position: absolute; inset: 0; background: radial-gradient(ellipse at 8% 85%, #00b8ff 0%, #00b0ff90 30%, #00a0ff00 60%); }
button, input { font: inherit; color: inherit; border: 0; background: none; padding: 0; margin: 0; outline: 0; }
button { display: flex; align-items: center; }
a { color: inherit; text-decoration: none; }
svg { display: block; flex: none; }
.grow { flex: 1; }
.i12 { width: 12px; height: 12px; }
.i14 { width: 14px; height: 14px; }
.i16 { width: 16px; height: 16px; }
.i24 { width: 24px; height: 24px; }
.i32 { width: 32px; height: 32px; }
.i34 { width: 34px; height: 34px; }
.i48 { width: 48px; height: 48px; }
.c12 { width: 12px; height: 8px; }
.c10 { width: 10px; height: 7px; }
.sep { width: 8px; height: 12px; }
.caret { width: 6px; height: 4px; }

.desktop { position: relative; flex: 1; }
.shortcuts { display: grid; grid-template-columns: repeat(3, 75px); grid-template-rows: repeat(7, 99px); }
.shortcut { display: flex; flex-direction: column; align-items: center; padding: 7px 1px 0 0; color: #fff; text-align: center; line-height: 15px; text-shadow: 0 1px 2px #00305a; }
.caption { margin-top: 3px; padding: 0 4px; }
.pic { position: relative; }
.overlay { position: absolute; left: 0; bottom: 0; width: 12px; height: 12px; }
.col1 { grid-column: 1; } .col2 { grid-column: 2; } .col3 { grid-column: 3; }
.row1 { grid-row: 1; } .row2 { grid-row: 2; } .row3 { grid-row: 3; } .row4 { grid-row: 4; } .row5 { grid-row: 5; } .row6 { grid-row: 6; } .row7 { grid-row: 7; }

.archive { position: absolute; left: 69px; top: 45px; right: 347px; bottom: 201px; display: flex; flex-direction: column; background: #fff; border: 1px solid #66788a; border-right: 0; overflow: hidden; }
.atitle { display: flex; align-items: center; gap: 5px; height: 30px; padding: 0 3px 0 7px; color: #999; flex: none; }
.atitle button { width: 41px; height: 28px; justify-content: center; }
.amenu { display: flex; gap: 14px; padding-left: 6px; height: 21px; color: #6a6a6a; border-bottom: 1px solid #e3e3e3; }
.atools { height: 60px; margin-left: 4px; border-left: 2px dotted #bbb; }
.atools button { flex-direction: column; width: 62px; padding-top: 6px; line-height: 18px; }
.apath { display: flex; margin-left: 4px; height: 31px; border-left: 2px dotted #bbb; }
.apath button { width: 44px; height: 28px; padding-left: 8px; color: #777; border-right: 2px dotted #bbb; }
.apath input { flex: 1; height: 25px; margin-left: 4px; border: 1px solid #777; }
.alist { flex: 1; background: #f6f6f6; border-top: 1px solid #777; }
.ahead { height: 25px; line-height: 26px; padding-left: 7px; background: #fff; }
.arow { display: flex; align-items: center; gap: 2px; height: 19px; padding-left: 5px; white-space: nowrap; }
.arow.parent span { flex: 1; background: #ededed; }
.astatus { height: 25px; background: #f0f0f0; border-top: 1px solid #777; display: flex; align-items: center; }
.drive { width: 38px; height: 14px; padding: 5px 0; margin-left: 2px; border-right: 1px solid #ddd; box-sizing: content-box; }

.explorer { position: absolute; left: 128px; top: 74px; right: 108px; bottom: 61px; display: flex; flex-direction: column; background: #fff; box-shadow: -1px 0 0 #dce6ee; }
.title { display: flex; align-items: center; height: 31px; padding: 0 1px 0 8px; flex: none; }
.bar { width: 1px; height: 13px; background: #999; margin: 0 7px; }
.quick { margin-left: 2px; margin-right: 5px; }
.custom { width: 9px; height: 9px; }
.custom svg { width: 9px; height: 9px; }
.wbtn { width: 46px; height: 30px; justify-content: center; }
.tabs { display: flex; align-items: stretch; height: 24px; flex: none; color: #444; }
.tabs button { width: 56px; justify-content: center; }
.tabs .file { background: #0063b1; color: #fff; }
.tabs .on { width: 58px; height: 25px; background: #f5f6f7; border: 1px solid #dadbdc; border-bottom: 0; z-index: 1; color: #222; }
.tabs .on + button { width: 58px; }
.tabs .fold { width: 24px; color: #999; }
.tabs .help { width: 16px; height: 16px; align-self: center; margin: 0 4px 2px 2px; border-radius: 50%; background: #0067b8; color: #fff; font-weight: 700; }

.ribbon { display: flex; flex: none; background: #f5f6f7; border-top: 1px solid #dadbdc; border-bottom: 1px solid #dadbdc; height: 92px; }
.group { flex: none; display: flex; flex-direction: column; border-right: 1px solid #e0e1e2; }
.clip { width: 263px; } .organize { width: 191px; } .new { width: 144px; } .opens { width: 134px; } .select { width: 115px; }
.tools { display: flex; height: 69px; padding-top: 3px; }
.clip .tools { padding-left: 5px; } .organize .tools { padding-left: 3px; } .new .tools { padding-left: 2px; } .opens .tools { padding-left: 0; } .select .tools { padding-left: 3px; }
.legend { text-align: center; line-height: 18px; padding-top: 3px; color: #5a5a5a; }
.big { flex-direction: column; width: 42px; padding-top: 3px; text-align: center; line-height: 13px; color: #222; gap: 4px; white-space: nowrap; }
.big .caret { display: inline-block; vertical-align: middle; }
.mid { width: 44px; } .wide { width: 68px; }
.organize .mid { width: 46px; }
.split { width: 1px; height: 58px; margin: 2px 0 2px 5px; background: #dfe1e3; }
.smalls { display: flex; flex-direction: column; margin-left: 4px; }
.clip .smalls { margin-left: 3px; }
.opens .smalls { margin-left: -2px; }
.smalls button { height: 22px; gap: 2px; color: #222; white-space: nowrap; }
.off, .smalls .off { color: #828a90; }

.address { display: flex; align-items: center; height: 35px; flex: none; padding: 0 13px 0 4px; color: #5e5e5e; }
.address > button { width: 30px; justify-content: center; }
.address > .dim { color: #c8c8c8; }
.address > .narrow { width: 16px; }
.address > .upper { width: 26px; }
.crumbs { flex: 1; display: flex; align-items: center; height: 23px; border: 1px solid #d9d9d9; padding-left: 2px; color: #222; }
.csep { width: 6px; height: 9px; margin: 0 8px; color: #666; }
.drop { width: 14px; color: #555; }
.refresh { width: 19px; height: 100%; justify-content: center; border-left: 1px solid #d9d9d9; }
.find { display: flex; align-items: center; width: 202px; height: 23px; margin-left: 10px; padding: 0 7px; border: 1px solid #d9d9d9; }
.find input { flex: 1; min-width: 0; }
.find input::placeholder { color: #6d6d6d; opacity: 1; }

.body { flex: 1; display: flex; min-height: 0; overflow: hidden; }
.tree { width: 139px; flex: none; list-style: none; margin: 0; padding: 0; }
.tree button { width: 100%; height: 24px; padding-left: 11px; white-space: nowrap; border: 1px solid transparent; }
.tree .child { padding-left: 19px; }
.tree .i16 { margin-right: 5px; }
.tree .active { background: #cce8ff; border-color: #99d1ff; }
.twist { width: 20px; color: #949494; }
.twist.closed { padding-left: 2px; }
.twist.open { color: #333; }
.scroll { width: 17px; display: flex; flex-direction: column; align-items: center; background: #f0f0f0; padding: 5px 0; color: #444; }
.before { flex: 158; } .after { flex: 84; } .thumb { flex: 119; width: 15px; background: #cdcdcd; }
.files { flex: 1; padding-right: 8px; }
table { width: 100%; table-layout: fixed; border-collapse: collapse; }
.w-name { width: 275px; } .w-date { width: 144px; } .w-type { width: 120px; } .w-size { width: 80px; }
th, td { padding: 0 7px; text-align: left; font-weight: 400; white-space: nowrap; }
thead th { height: 26px; padding-left: 6px; color: #4c607a; border-left: 1px solid #e5e5e5; position: relative; }
thead .first { padding-left: 21px; border: 0; }
.sorted { position: absolute; left: 67px; top: 0; width: 9px; height: 6px; color: #777; }
tbody td { height: 21px; color: #6d6d6d; }
tbody .fname { padding-left: 22px; color: #000; }
.fname div { display: flex; align-items: center; gap: 4px; }
.num { text-align: right; }
.ghead th { height: 32px; padding: 2px 0 0 9px; font-size: 14px; color: #1e3287; }
tbody:nth-of-type(1) .ghead th { height: 33px; }
.ghead div { display: flex; align-items: center; }
.ghead svg { color: #777; margin-right: 4px; }
.ghead i { flex: 1; height: 1px; margin-left: 8px; background: #dedede; }
.status { display: flex; align-items: center; height: 24px; flex: none; padding: 0 5px 0 14px; color: #1e395b; }
.view { width: 22px; height: 22px; justify-content: center; }
.view.on { background: #cce8ff; border: 1px solid #26a0da; }

.mark { position: absolute; right: 49px; bottom: 5px; display: flex; align-items: center; gap: 9px; color: #fff; opacity: .45; font: 32px/60px "Liberation Sans Narrow", "Roboto", sans-serif; }
.mark svg { width: 53px; height: 62px; }
.build { position: absolute; right: 4px; bottom: 0; text-align: right; color: #fff; font-size: 11px; line-height: 17px; text-shadow: 0 1px 1px #002; }

.taskbar { position: relative; height: 40px; flex: none; display: flex; align-items: center; color: #fff; background: linear-gradient(90deg, #001a27, #00131f 50%, #000a1c); }
.start { width: 48px; height: 40px; justify-content: center; }
.tsearch { display: flex; align-items: center; width: 288px; height: 40px; padding: 0 10px 0 12px; background: #f1f1f1; color: #222; }
.tsearch input { flex: 1; min-width: 0; padding-left: 12px; font-size: 14px; }
.tsearch input::placeholder { color: #444; opacity: 1; }
.board { width: 58px; height: 36px; }
.app { width: 49px; height: 40px; justify-content: center; }
.app.edge { width: 51px; }
.current { width: 48px; background: #30434e; border-bottom: 2px solid #76b9ed; }
.running { width: 40px; margin-left: 5px; border-bottom: 2px solid #76b9ed; }
.tv { width: 18px; height: 16px; }
.tray { width: 24px; height: 40px; justify-content: center; }
.clock { width: 64px; justify-content: center; text-align: center; line-height: 18px; white-space: nowrap; }
.note { width: 40px; justify-content: center; }
.note svg { width: 18px; height: 18px; }
.peek { width: 1px; height: 40px; margin: 0 3px 0 9px; background: #44505c; }
</style>
